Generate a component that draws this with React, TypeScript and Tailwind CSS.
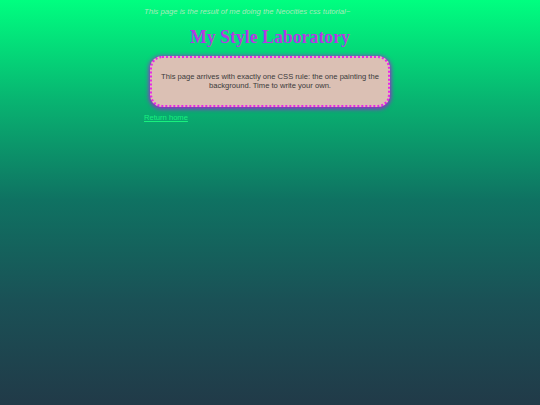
export default function App() {
    return (
        <main className="min-h-[405px] w-full bg-[linear-gradient(to_bottom,#00ff80_0px,#08b471_100px,#0f7262_200px,#1a5156_300px,#213a48_405px)] font-['Liberation_Sans',Arial,sans-serif]">
            <div className="mx-auto w-[252px] pt-[7px]">
                <p className="text-[7.65px] italic leading-[10px] text-[#a8ebbc]">
                    This page is the result of me doing the Neocities css tutorial~
                </p>

                <h1 className="mt-[9px] text-center font-['Liberation_Serif',Georgia,serif] text-[17.8px] font-bold leading-[22px] text-[#b43be4]">
                    My Style Laboratory
                </h1>

                <div className="mx-[6px] mt-[8px] rounded-[12px] border-2 border-dotted border-[#e828e8] bg-[#dbc0b4] px-[7px] pt-[13.5px] pb-[14px] shadow-[0_1px_4px_1px_#a020d0]">
                    <p className="text-center text-[7.6px] leading-[9.5px] text-[#3a3a3a]">
                        This page arrives with exactly one CSS rule: the one
                        painting the background. Time to write your own.
                    </p>
                </div>

                <a
                    href="#"
                    className="mt-[6px] block w-fit text-[7.6px] leading-[10px] text-[#18f07e] underline"
                >
                    Return home
                </a>
            </div>
        </main>
    );
}
